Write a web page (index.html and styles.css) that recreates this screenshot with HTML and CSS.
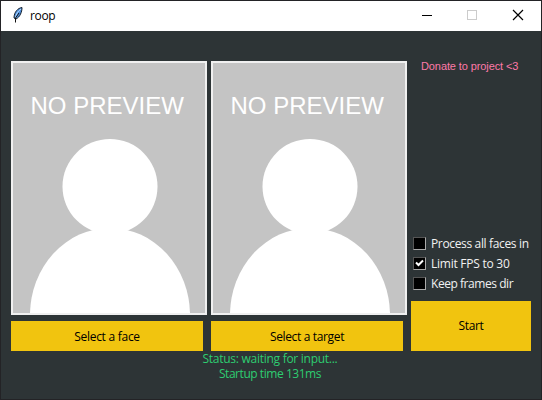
FILE: index.html
```
<!DOCTYPE html>
<html lang="en">
<head>
<meta charset="utf-8">
<title>roop</title>
<link rel="stylesheet" href="styles.css">
</head>
<body>
<div class="window">
  <header class="titlebar">
    <svg class="feather" width="12" height="18" viewBox="0 0 12 18">
      <path d="M10 1.500C6 2 2 6 2 12l2 1C8 11 10 6 10 1.500z" fill="#4f8fdc" stroke="#17212d"/>
      <path d="M9 3C6 5 4 8 3.500 12" fill="none" stroke="#b8dcff"/>
      <path d="M7 7 3.500 12v4.500" fill="none" stroke="#111"/>
    </svg>
    <span class="title">roop</span>
    <svg class="controls" width="106" height="30" viewBox="0 0 106 30" shape-rendering="crispEdges">
      <path d="M0 14.500h10" stroke="#000"/>
      <rect x="45.500" y="9.500" width="9" height="9" fill="none" stroke="#ccc"/>
      <path d="M91 9l10 10M101 9l-10 10" stroke="#000" stroke-width="1.200" shape-rendering="auto"/>
    </svg>
  </header>
  <main class="content">
    <section class="column">
      <svg class="preview" viewBox="0 0 192 250">
        <circle cx="97" cy="123.500" r="47.500" fill="#fff"/>
        <ellipse cx="97" cy="252" rx="80" ry="87" fill="#fff"/>
        <text x="17.500" y="51" class="no-preview">NO PREVIEW</text>
      </svg>
      <button class="select"><span class="t-face">Select a face</span></button>
    </section>
    <section class="column">
      <svg class="preview" viewBox="0 0 192 250">
        <circle cx="97" cy="123.500" r="47.500" fill="#fff"/>
        <ellipse cx="97" cy="252" rx="80" ry="87" fill="#fff"/>
        <text x="17.500" y="51" class="no-preview">NO PREVIEW</text>
      </svg>
      <button class="select"><span>Select a target</span></button>
    </section>
    <aside class="side">
      <a class="donate">Donate to project &lt;3</a>
      <div class="options">
        <label class="option"><i class="box"></i><span>Process all faces in</span></label>
        <label class="option"><i class="box"><svg width="11" height="11" viewBox="0 0 11 11"><path d="M2 4.500 4.500 7 9 2.500" fill="none" stroke="#fff" stroke-width="2"/></svg></i><span class="t-limit">Limit FPS to 30</span></label>
        <label class="option"><i class="box"></i><span class="t-keep">Keep frames dir</span></label>
      </div>
      <button class="start"><span>Start</span></button>
    </aside>
  </main>
  <footer class="status">
    <div class="t-status">Status: waiting for input...</div>
    <div class="t-startup">Startup time 131ms</div>
  </footer>
</div>
</body>
</html>
```
FILE: styles.css
```
* { box-sizing: border-box; }
body {
  margin: 0;
  width: 542px;
  height: 400px;
  overflow: hidden;
  background: #232326;
  font: 12px/15px "Open Sans", "Noto Sans", sans-serif;
  letter-spacing: -0.35px;
}
.window {
  position: relative;
  top: 1px;
  left: 1px;
  width: 540px;
  height: 398px;
  background: #2d3436;
}
.titlebar {
  display: flex;
  height: 30px;
  padding-left: 11px;
  background: #fff;
  color: #000;
}
.feather { margin-top: 5px; }
.title { margin: 7px 0 0 6px; }
.controls { margin: 0 13px 0 auto; }
.content {
  display: flex;
  gap: 4px;
  padding: 30px 10px 0;
  height: 320px;
}
.column { width: 196px; }
.preview {
  display: block;
  width: 196px;
  height: 254px;
  border: 2px solid #f0f0f0;
  background: #c4c4c4;
}
.no-preview {
  font: 24px "Liberation Sans", Arial, sans-serif;
  letter-spacing: 0;
  fill: #fff;
}
button {
  display: flex;
  align-items: center;
  justify-content: center;
  padding: 0;
  border: 0;
  background: #f1c40f;
  color: #000;
  font: inherit;
  letter-spacing: inherit;
  white-space: nowrap;
}
.select { width: 192px; height: 30px; margin-top: 6px; }
.t-face { letter-spacing: -0.27px; }
.side {
  display: flex;
  flex-direction: column;
  width: 120px;
  height: 290px;
}
.donate {
  padding-left: 10px;
  margin-top: -2px;
  color: #fd79a8;
  font: 11px/15px "Liberation Sans", Arial, sans-serif;
  letter-spacing: -0.1px;
  white-space: nowrap;
}
.options { margin-top: auto; height: 68px; }
.option {
  display: flex;
  align-items: center;
  gap: 5px;
  height: 20px;
  padding-left: 2px;
  color: #f1f1f1;
  white-space: nowrap;
}
.t-limit { letter-spacing: -0.25px; }
.t-keep { letter-spacing: -0.45px; }
.box {
  display: block;
  width: 13px;
  height: 13px;
  background: #000;
  border: 1px solid #555;
  border-right-color: #aaa;
  border-bottom-color: #aaa;
}
.box svg { display: block; }
.start { width: 120px; height: 50px; padding-bottom: 2px; }
.status {
  width: 538px;
  color: #2ecc71;
  text-align: center;
}
.t-status { letter-spacing: -0.27px; }
.t-startup { letter-spacing: -0.45px; }
```
